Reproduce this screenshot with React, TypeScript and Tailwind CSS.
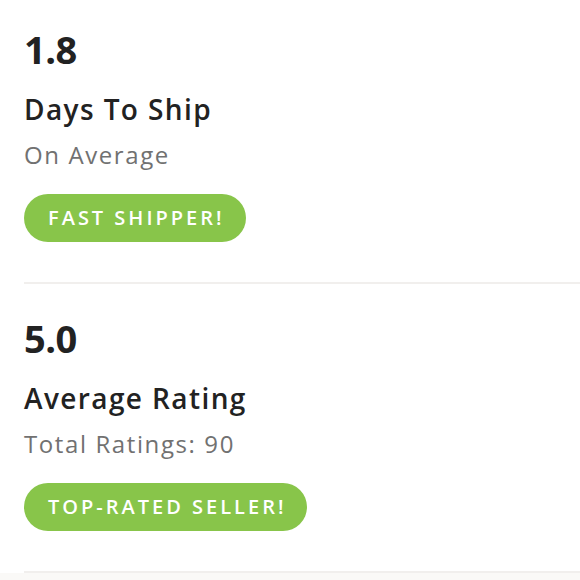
const stats = [
  { value: "1.8", title: "Days To Ship", sub: "On Average", badge: "FAST SHIPPER!" },
  { value: "5.0", title: "Average Rating", sub: "Total Ratings: 90", badge: "TOP-RATED SELLER!" },
];

const StatBlock = ({ value, title, sub, badge, first }: { value: string; title: string; sub: string; badge: string; first?: boolean }) => (
  <div className={`flex flex-col items-start border-b-2 border-[#f1efed] ${first ? "pt-[25px]" : "pt-[30px]"} pb-[40px]`}>
    <div className="text-[38px] leading-[48px] font-bold text-[#222222] tracking-[-0.5px]">{value}</div>
    <div className="text-[28px] leading-[38px] font-semibold text-[#222222] tracking-[1.4px] mt-[17px]">{title}</div>
    <div className="text-[24px] leading-[34px] text-[#717171] tracking-[1.6px] mt-[10px]">{sub}</div>
    <div className="mt-[22px] h-[48px] pl-6 pr-[21px] rounded-full bg-[#88c54a] flex items-center text-white text-[20px] font-semibold tracking-[3px]">
      {badge}
    </div>
  </div>
);

export default function App() {
  return (
    <div className="w-[580px] h-[580px] bg-white overflow-hidden flex flex-col" style={{ fontFamily: "'Open Sans', sans-serif" }}>
      <div className="pl-6">
        {stats.map((s, i) => (
          <StatBlock key={s.value} {...s} first={i === 0} />
        ))}
      </div>
      <div className="flex-1 bg-[#faf9f7]" />
    </div>
  );
}
